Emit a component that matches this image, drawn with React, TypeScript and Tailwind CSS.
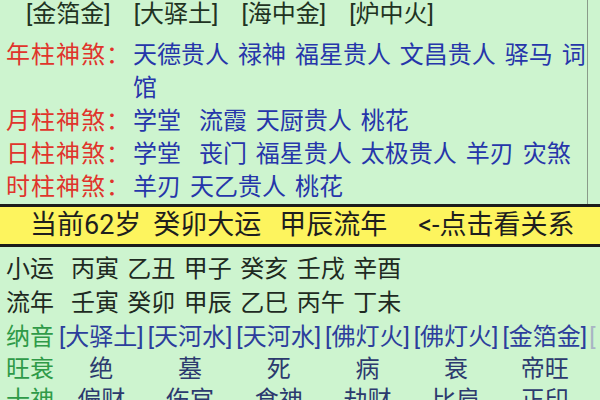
import React from 'react';

const shensha = [
  { label: '年柱神煞：', items: '天德贵人 禄神 福星贵人 文昌贵人 驿马 词馆' },
  { label: '月柱神煞：', items: '学堂  流霞 天厨贵人 桃花' },
  { label: '日柱神煞：', items: '学堂  丧门 福星贵人 太极贵人 羊刃 灾煞' },
  { label: '时柱神煞：', items: '羊刃 天乙贵人 桃花' },
];

const nayin = ['[大驿土]', '[天河水]', '[天河水]', '[佛灯火]', '[佛灯火]', '[金箔金]'];
const wangshuai = ['绝', '墓', '死', '病', '衰', '帝旺'];
const shishen = ['偏财', '伤官', '食神', '劫财', '比肩', '正印'];

export default function App() {
  return (
    <div
      className="w-[600px] h-[400px] overflow-hidden bg-[#cdf4cf] text-[24px] leading-[33px]"
      style={{ fontFamily: 'Roboto, "Noto Sans CJK SC", sans-serif' }}
    >
      {/* 四柱纳音 + 神煞 */}
      <div className="w-[588px] border-r border-[#8a9a8a]">
        <div className="flex gap-[23px] pl-[26px] text-[#1f3322] -mt-[2px] mb-[8px]">
          <span>[金箔金]</span>
          <span>[大驿土]</span>
          <span>[海中金]</span>
          <span>[炉中火]</span>
        </div>
        {shensha.map((row) => (
          <div key={row.label} className="flex">
            <span className="w-[133px] shrink-0 pl-[6px] tracking-[1px] text-[#e0342c]">{row.label}</span>
            <span className="flex-1 text-[#2636aa] whitespace-pre-wrap [word-spacing:3px]">{row.items}</span>
          </div>
        ))}
      </div>

      {/* 当前运势 */}
      <div className="h-[43px] border-y-[3px] border-[#1c1c1c] bg-[#fdf45e] flex items-center pl-[30px] text-[27px] text-[#1e1e1e]">
        <span>当前62岁</span>
        <span className="ml-[12px]">癸卯大运</span>
        <span className="ml-[18px]">甲辰流年</span>
        <span className="ml-[31px]">{'<'}-点击看关系</span>
      </div>

      {/* 小运 / 流年 / 纳音 / 旺衰 / 十神 */}
      <div className="pt-[5px] text-[#1e2a22] leading-[34px]">
        <div className="pl-[6px] whitespace-pre [word-spacing:2.5px]">小运  丙寅 乙丑 甲子 癸亥 壬戌 辛酉</div>
        <div className="pl-[6px] whitespace-pre [word-spacing:2.5px]">流年  壬寅 癸卯 甲辰 乙巳 丙午 丁未</div>
        <div className="flex pl-[6px] whitespace-nowrap">
          <span className="w-[51px] shrink-0 text-[#2f9a48]">纳音</span>
          {nayin.map((n, i) => (
            <span key={i} className="w-[88.7px] shrink-0 text-center text-[#2c3e9c]">{n}</span>
          ))}
          <span className="text-[#a8b4c4]">[</span>
        </div>
        <div className="flex pl-[6px] leading-[31px]">
          <span className="w-[51px] shrink-0 text-[#2f9a48]">旺衰</span>
          {wangshuai.map((n, i) => (
            <span key={i} className="w-[88.7px] shrink-0 text-center text-[#2c3a6e]">{n}</span>
          ))}
        </div>
        <div className="flex pl-[6px] leading-[31px]">
          <span className="w-[51px] shrink-0 text-[#2f9a48]">十神</span>
          {shishen.map((n, i) => (
            <span key={i} className="w-[88.7px] shrink-0 text-center text-[#2c3a6e]">{n}</span>
          ))}
        </div>
      </div>
    </div>
  );
}
